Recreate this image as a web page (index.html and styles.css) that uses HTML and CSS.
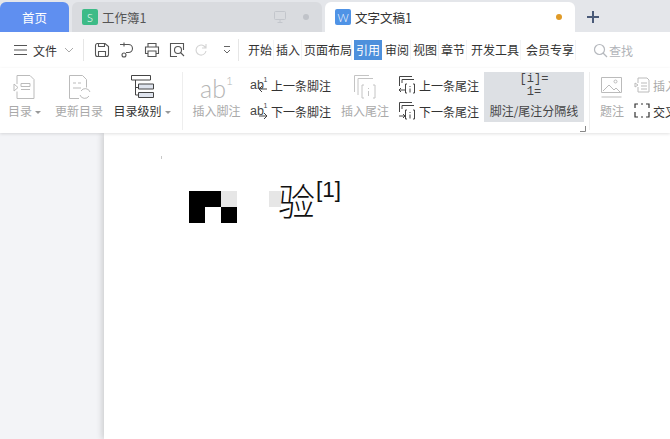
FILE: index.html
```html
<!DOCTYPE html>
<html lang="zh-CN">
<head>
  <meta charset="UTF-8" />
  <title>文字文稿1</title>
  <link rel="stylesheet" href="styles.css">
</head>
<body>

  <div class="tabbar">
    <div class="tab tab-home">首页</div>
    <div class="tab tab-sheet">
      <span class="doc-badge badge-green">S</span>
      <span class="tab-title">工作簿1</span>
      <svg class="tab-monitor" width="14" height="14" viewBox="0 0 14 14" fill="none" stroke="#c3c6cc"><rect x="1.5" y="1.5" width="11" height="8" rx="1"/><path d="M7 9.5v3M4.5 12.5h5"/></svg>
      <span class="tab-dot dot-grey"></span>
    </div>
    <div class="tab tab-doc">
      <span class="doc-badge badge-blue">W</span>
      <span class="tab-title">文字文稿1</span>
      <span class="tab-dot dot-orange"></span>
    </div>
    <svg class="tab-plus" width="14" height="14" viewBox="0 0 14 14" stroke="#4a5a78" stroke-width="2"><path d="M7 1v12M1 7h12"/></svg>
  </div>

  <div class="menubar">
    <div class="file-menu">
      <svg width="15" height="12" viewBox="0 0 15 12" stroke="#555" fill="none"><path d="M1 1.5h13M1 6h13M1 10.5h13"/></svg>
      <span>文件</span>
      <svg width="10" height="6" viewBox="0 0 10 6" stroke="#aaa" fill="none"><path d="M1 1l4 4 4-4"/></svg>
    </div>
    <div class="quick-tools">
      <svg width="16" height="16" viewBox="0 0 16 16" fill="none" stroke="#555" stroke-width="1.1"><path d="M3 1.500h8l3.500 3v8a2 2 0 0 1-2 2h-9a2 2 0 0 1-2-2v-9a2 2 0 0 1 1.500-2z"/><path d="M4.500 14.500v-5h7v5M4.500 1.500v3h6v-3"/></svg>
      <svg width="16" height="16" viewBox="0 0 16 16" fill="none" stroke="#555" stroke-width="1.1"><path d="M1 2.500h8.500a4 4 0 0 1 0 8H7"/><path d="M5 .5v4"/><circle cx="5" cy="13" r="2"/></svg>
      <svg width="16" height="16" viewBox="0 0 16 16" fill="none" stroke="#555" stroke-width="1.1"><path d="M4 5V1.500h8V5M4 11.500H1.500V5h13v6.500H12"/><path d="M4 9h8v5.500H4z"/></svg>
      <svg width="16" height="16" viewBox="0 0 16 16" fill="none" stroke="#555" stroke-width="1.1"><path d="M14.500 8V1.500h-13v13H8"/><circle cx="9" cy="8" r="3.500"/><path d="M11.500 10.500l3.500 3.500"/></svg>
      <svg width="14" height="14" viewBox="0 0 14 14" fill="none" stroke="#d4d4d4" stroke-width="1.1"><path d="M12 8a5 5 0 1 1-2-5l2 2M12 1v4H8"/></svg>
      <svg class="more-tools" width="10" height="10" viewBox="0 0 10 10" fill="none" stroke="#666"><path d="M2 1.500h6M2 5l3 3 3-3"/></svg>
    </div>
    <nav class="menu-tabs">
      <span class="menu-tab">开始</span>
      <span class="menu-tab">插入</span>
      <span class="menu-tab">页面布局</span>
      <span class="menu-tab menu-active">引用</span>
      <span class="menu-tab">审阅</span>
      <span class="menu-tab">视图</span>
      <span class="menu-tab">章节</span>
      <span class="menu-tab menu-wide">开发工具</span>
      <span class="menu-tab menu-wide">会员专享</span>
    </nav>
    <div class="search">
      <svg width="15" height="15" viewBox="0 0 15 15" fill="none" stroke="#b5b8bd" stroke-width="1.2"><circle cx="6.500" cy="6.500" r="5"/><path d="M10 10l4 4"/></svg>
      <span>查找</span>
    </div>
  </div>

  <div class="ribbon">
    <div class="rb-item w-toc muted">
      <svg width="24" height="26" viewBox="0 0 24 26" fill="none" stroke="#bbb"><path d="M4 1.500h13l4 4v19H4v-7M4 10V1.500"/><path d="M1 10l4 3.500-4 3.500zM8 9.500h9v3H8zM8 15.500h9"/></svg>
      <span>目录<i class="caret"></i></span>
    </div>
    <div class="rb-item w-update muted">
      <svg width="24" height="26" viewBox="0 0 24 26" fill="none" stroke="#bbb"><path d="M12 24.500H2.500v-23h13l4 4v8"/><path d="M6 9h3M11 9h3M6 14h8"/><path d="M23 18a5 5 0 0 0-9-1M13 21a5 5 0 0 0 9 1"/></svg>
      <span>更新目录</span>
    </div>
    <div class="rb-item w-level">
      <svg width="24" height="26" viewBox="0 0 24 26" fill="none" stroke="#444"><path d="M1.500 1.500h19v4.500h-19z"/><path d="M5.500 6v15h3M5.500 13.500h3"/><path fill="#dfe4ee" d="M8.500 10h15v5h-15zM8.500 18.500h15v5h-15z"/></svg>
      <span>目录级别<i class="caret"></i></span>
    </div>
    <div class="rb-sep sep-a"></div>
    <div class="rb-item w-foot muted">
      <div class="ab-mark">ab<sup>1</sup></div>
      <span>插入脚注</span>
    </div>
    <div class="rb-stack w-nav-foot">
      <div class="rb-row">
        <svg width="18" height="20" viewBox="0 0 18 20" fill="none" stroke="#444"><text x="0" y="14" class="mini-ab">ab</text><text x="13.500" y="7" class="mini-one">1</text><path d="M17 14h-8M12 11l-3 3 3 3"/></svg>
        <span>上一条脚注</span>
      </div>
      <div class="rb-row">
        <svg width="18" height="20" viewBox="0 0 18 20" fill="none" stroke="#444"><text x="0" y="14" class="mini-ab">ab</text><text x="13.500" y="7" class="mini-one">1</text><path d="M9 15h8M14 12l3 3-3 3"/></svg>
        <span>下一条脚注</span>
      </div>
    </div>
    <div class="rb-item w-end muted">
      <svg width="24" height="26" viewBox="0 0 24 26" fill="none" stroke="#c4c4c4"><path d="M1.500 18V1.500H16M5 21V4.500h15"/><path d="M11 11h-2v13h2M20 11h2v13h-2"/><path d="M15.500 14v1M15.500 17v5"/></svg>
      <span>插入尾注</span>
    </div>
    <div class="rb-stack w-nav-end">
      <div class="rb-row">
        <svg width="18" height="20" viewBox="0 0 18 20" fill="none" stroke="#444"><path d="M1.500 11V1.500H14M4 8V4.500h12"/><path d="M9 9H7.500v9H9M15 9h1.500v9H15M12 11v1M12 13.500v4M7 15H1M3 13l-2 2 2 2"/></svg>
        <span>上一条尾注</span>
      </div>
      <div class="rb-row">
        <svg width="18" height="20" viewBox="0 0 18 20" fill="none" stroke="#444"><path d="M1.500 11V1.500H14M4 8V4.500h12"/><path d="M9 9H7.500v9H9M15 9h1.500v9H15M12 11v1M12 13.500v4M1 15h6M5 13l2 2-2 2"/></svg>
        <span>下一条尾注</span>
      </div>
    </div>
    <div class="rb-item w-divider">
      <div class="divider-mark"><div>[i]=</div><div>1=</div></div>
      <span>脚注/尾注分隔线</span>
    </div>
    <svg class="corner-mark" width="6" height="6" viewBox="0 0 6 6" fill="none" stroke="#888"><path d="M5.500 0v5.500H0"/></svg>
    <div class="rb-sep sep-b"></div>
    <div class="rb-item w-caption muted">
      <svg width="24" height="26" viewBox="0 0 24 26" fill="none" stroke="#bbb"><path d="M1.500 3.500h20v15h-20zM1.500 23h20"/><circle cx="15.500" cy="7.500" r="1.500"/><path d="M3 17l6-6 5 5 2-2 4 4"/></svg>
      <span>题注</span>
    </div>
    <div class="rb-stack w-cross">
      <div class="rb-row muted">
        <svg width="16" height="18" viewBox="0 0 16 18" fill="none" stroke="#bbb"><path d="M4 2h9l2 2v12H4v-5M4 7V2M1 7l3 2-3 2zM7 7h6M7 10h6M7 13h6"/></svg>
        <span>插入表目录</span>
      </div>
      <div class="rb-row">
        <svg width="16" height="18" viewBox="0 0 16 18" fill="none" stroke="#333" stroke-width="1.200"><path d="M1 6V2h3M7 2h2M12 2h3v4M1 10v5h3M12 15h3v-5M7 15h2"/></svg>
        <span>交叉引用</span>
      </div>
    </div>
  </div>

  <div class="workspace">
    <div class="gutter"></div>
    <div class="page">
      <span class="margin-tick"></span>
      <div class="doc-line">
        <div class="pixels">
          <i class="px-black"></i><i class="px-black"></i><i class="px-grey"></i>
          <i class="px-black"></i><i></i><i class="px-black"></i>
        </div>
        <i class="cursor-patch"></i>
        <span class="doc-char">验</span>
        <span class="doc-note">[1]</span>
      </div>
    </div>
  </div>

</body>
</html>
```

FILE: styles.css
```css
* {
  box-sizing: border-box;
}

html, body {
  height: 100%;
}

body {
  margin: 0;
  display: flex;
  flex-direction: column;
  overflow: hidden;
  background: #fff;
  color: #333;
  font-family: "Noto Sans CJK SC", "Liberation Sans", sans-serif;
  font-size: 12px;
}

svg {
  display: block;
  flex: none;
}

/* tabs */
.tabbar {
  display: flex;
  align-items: flex-end;
  gap: 3px;
  height: 32px;
  background: #e4e6ea;
}

.tab {
  display: flex;
  align-items: center;
  width: 250px;
  height: 30px;
  padding-left: 10px;
  border-radius: 6px 6px 0 0;
  font-size: 12.500px;
}

.tab-home {
  justify-content: center;
  width: 69px;
  padding: 0;
  background: #5f8ff0;
  color: #fff;
}

.tab-sheet {
  background: #d9dbdf;
  color: #555;
}

.tab-doc {
  background: #fff;
  color: #333;
}

.doc-badge {
  display: flex;
  align-items: center;
  justify-content: center;
  width: 16px;
  height: 16px;
  margin-right: 4px;
  border-radius: 2px;
  color: #fff;
  font-family: Lato, sans-serif;
  font-size: 11px;
  font-weight: 300;
}

.badge-green {
  background: #3dbb87;
}

.badge-blue {
  background: #4f93e6;
}

.tab-title {
  flex: 1;
}

.tab-monitor {
  margin-right: 16px;
}

.tab-dot {
  width: 6px;
  height: 6px;
  margin-right: 13px;
  border-radius: 50%;
}

.dot-grey {
  background: #c0c3c9;
}

.dot-orange {
  background: #e09a27;
}

.tab-plus {
  margin: 0 0 8px 8px;
}

/* menu row */
.menubar {
  display: flex;
  align-items: center;
  height: 36px;
  padding-left: 13px;
}

.file-menu {
  display: flex;
  align-items: center;
  gap: 5px;
  width: 71px;
  height: 22px;
  border-right: 1px solid #e6e6e6;
}

.file-menu span {
  margin-right: 2px;
}

.quick-tools {
  display: flex;
  align-items: center;
  gap: 9px;
  width: 155px;
  padding-left: 10px;
  height: 22px;
  border-right: 1px solid #e6e6e6;
}

.more-tools {
  margin-left: 5px;
}

.menu-tabs {
  display: flex;
  align-items: center;
  margin-left: 7px;
  line-height: 20px;
}

.menu-tab {
  width: 28px;
  padding: 0 2px;
  border-right: 1px solid #f3f4f6;
  white-space: nowrap;
}

.menu-tab:nth-child(3) {
  width: 50px;
}

.menu-active {
  margin: 0 1px 0 2px;
  background: #4d90dc;
  color: #fff;
  border-right: 0;
}

.menu-wide {
  width: 52px;
  margin: 0 1px 0 2px;
}

.search {
  display: flex;
  align-items: center;
  gap: 1px;
  margin-left: 16px;
  color: #b0b3b8;
}

/* ribbon */
.ribbon {
  position: relative;
  z-index: 2;
  display: flex;
  flex: none;
  height: 65px;
  padding-top: 4px;
  background: #fff;
  box-shadow: 0 1px 3px rgba(0, 0, 0, 0.12);
  overflow: hidden;
  white-space: nowrap;
}

.rb-item {
  display: flex;
  flex: none;
  flex-direction: column;
  align-items: center;
  height: 50px;
  padding-top: 2px;
}

.rb-item svg,
.ab-mark,
.divider-mark {
  height: 26px;
}

.rb-item span {
  margin-top: 3px;
  line-height: 16px;
}

.muted {
  color: #a9a9a9;
}

.caret {
  display: inline-block;
  margin-left: 3px;
  vertical-align: 2px;
  border: 3px solid transparent;
  border-top-color: #999;
  border-bottom: 0;
}

.w-toc {
  width: 49px;
}

.w-update {
  width: 60px;
}

.w-level {
  width: 66px;
}

.rb-sep {
  flex: none;
  width: 1px;
  height: 58px;
  background: #eeeeee;
}

.sep-a {
  margin-left: 7px;
}

.w-foot {
  width: 67px;
}

.ab-mark {
  color: #b5b5b5;
  font-family: Lato, sans-serif;
  font-size: 25px;
  font-weight: 300;
  line-height: 28px;
}

.ab-mark sup {
  font-size: 12px;
  line-height: 0;
  vertical-align: 13px;
}

.rb-stack {
  display: flex;
  flex: none;
  flex-direction: column;
  gap: 6px;
  padding-top: 3px;
}

.rb-row {
  display: flex;
  align-items: center;
  gap: 3px;
  height: 20px;
}

.mini-ab {
  fill: #444;
  stroke: none;
  font-family: "Liberation Sans", sans-serif;
  font-size: 12.500px;
}

.mini-one {
  fill: #444;
  stroke: none;
  font-family: "Liberation Sans", sans-serif;
  font-size: 7px;
}

.w-nav-foot {
  width: 90px;
}

.w-end {
  width: 50px;
}

.w-nav-end {
  width: 86px;
  margin-left: 8px;
}

.w-divider {
  width: 100px;
  padding-top: 1px;
  background: #dde0e4;
  color: #444;
}

.divider-mark {
  margin-bottom: 1px;
  font-family: "Liberation Mono", monospace;
  font-size: 12px;
  line-height: 13px;
  text-align: center;
}

.corner-mark {
  align-self: flex-start;
  margin: 54px 0 0 -4px;
}

.sep-b {
  margin-left: 3px;
}

.w-caption {
  width: 44px;
}

.w-cross {
  width: 70px;
}

/* document */
.workspace {
  display: flex;
  flex: 1;
  min-height: 0;
}

.gutter {
  width: 104px;
  background: #f3f4f7;
}

.page {
  position: relative;
  flex: 1;
  padding: 58px 0 0 85px;
  background: #fff;
  box-shadow: -2px 0 6px rgba(0, 0, 0, 0.16);
}

.margin-tick {
  position: absolute;
  top: 23px;
  left: 57px;
  width: 1px;
  height: 3px;
  background: #c8c8c8;
}

.doc-line {
  display: flex;
  align-items: flex-start;
}

.pixels {
  display: grid;
  grid-template-columns: repeat(3, 16px);
  grid-auto-rows: 16px;
}

.px-black {
  background: #000;
}

.px-grey {
  background: #e6e6e6;
}

.cursor-patch {
  width: 12px;
  height: 16px;
  margin-left: 32px;
  background: #e6e6e6;
}

.doc-char {
  margin: -17px 0 0 -3px;
  color: #111;
  font-size: 37px;
  font-weight: 300;
  line-height: 52px;
}

.doc-note {
  margin: -15px 0 0 1px;
  color: #111;
  font-family: "Liberation Sans", sans-serif;
  font-size: 22.500px;
  line-height: 28px;
}
```
